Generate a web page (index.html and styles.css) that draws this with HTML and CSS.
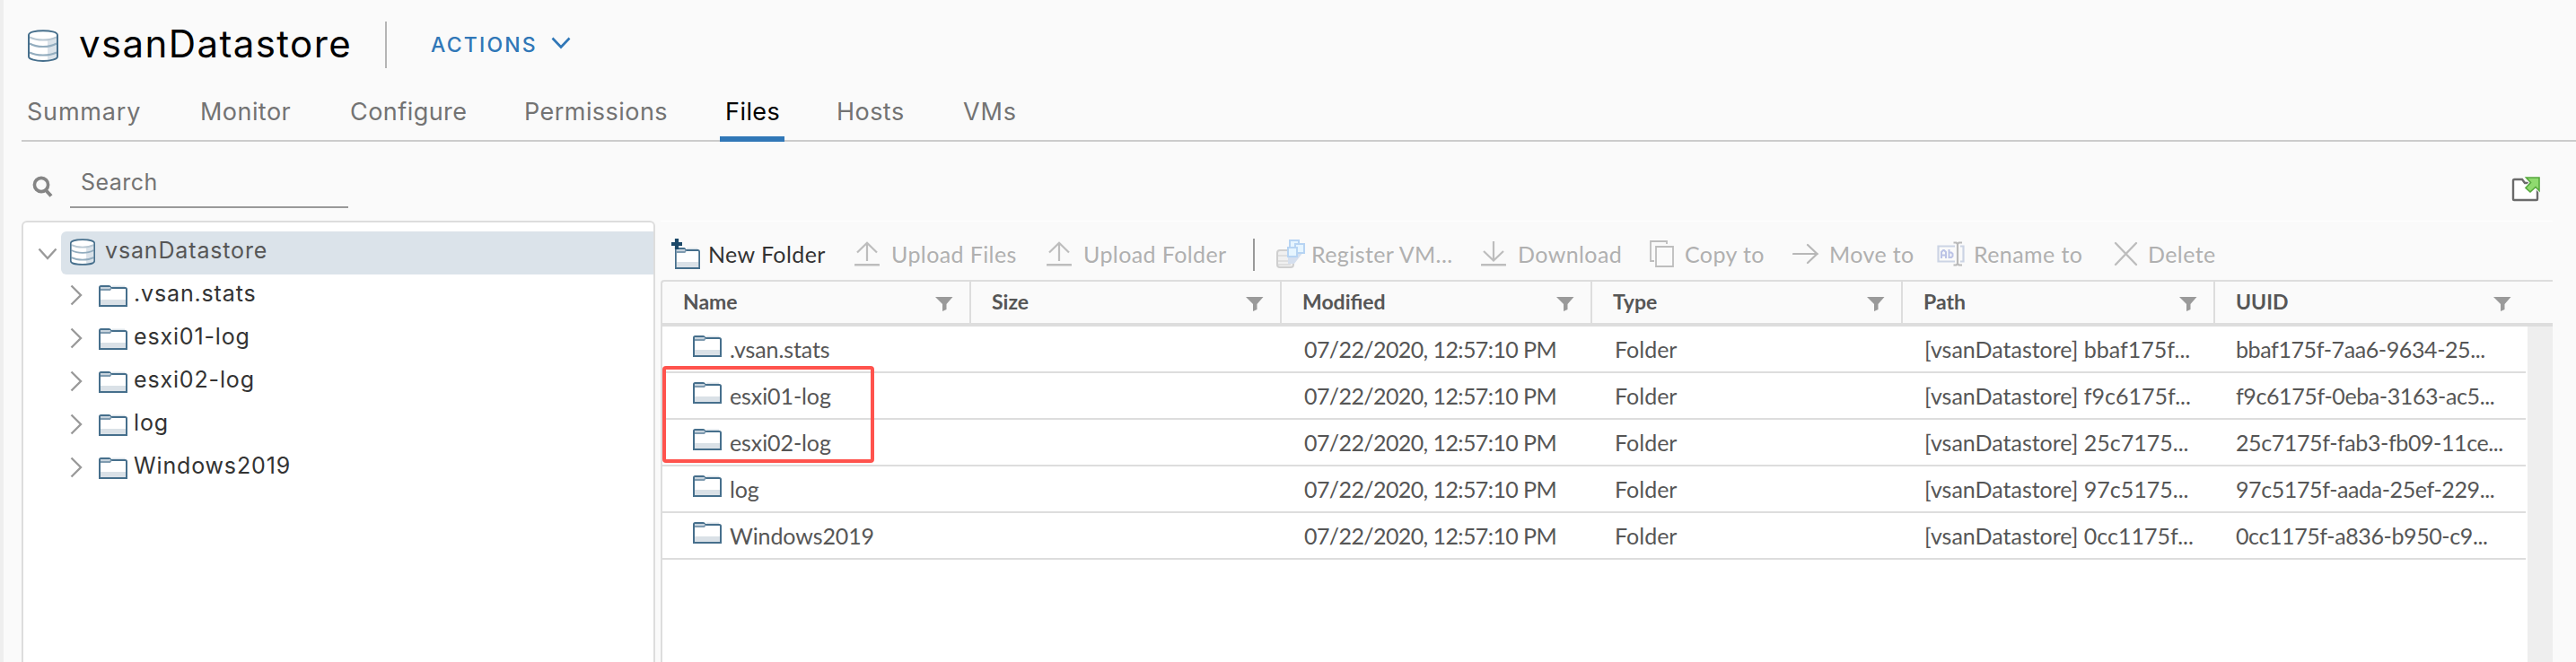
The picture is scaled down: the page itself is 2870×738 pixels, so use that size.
FILE: index.html
```html
<!DOCTYPE html>
<html lang="en">
<head>
<meta charset="utf-8">
<title>vsanDatastore</title>
<link rel="stylesheet" href="styles.css">
</head>
<body>
<svg class="defs" aria-hidden="true">
  <symbol id="folder" viewBox="0 0 32 24">
    <rect x="1" y="3" width="30" height="20" fill="#fff"/>
    <rect x="2" y="16" width="28" height="6" fill="#dae1e7"/>
    <path d="M1 23V2.500Q1 1 2.500 1H11.500Q13 1 13.500 3H29.500Q31 3 31 4.500V23Z" fill="none" stroke="#466f8c" stroke-width="2"/>
    <rect x="2" y="2" width="11" height="2.200" fill="#c8d4de"/>
    <path d="M2 5H12.500L14 3" fill="none" stroke="#7f9bb0" stroke-width="1.800"/>
    <path d="M15 1.200H29" stroke="#ccd7e0" stroke-width="1"/>
  </symbol>
  <symbol id="datastore" viewBox="0 0 34 36">
    <path d="M1 6C1 -.5 33 -.5 33 6V30C33 36.500 1 36.500 1 30Z" fill="#fff"/>
    <path d="M22 10.500Q29 9.500 32 7.500V30Q30 33 22 34Z" fill="#dbe3ea"/>
    <path d="M2 8.500Q8 11.500 17 11.500T32 8.500" fill="none" stroke="#b9c8d3" stroke-width="2.200"/>
    <path d="M2 15.500Q8 19 17 19T32 15.500M2 25.500Q8 28.500 17 28.500T32 25.500" fill="none" stroke="#93adbf" stroke-width="2.200"/>
    <path d="M1 6C1 -.5 33 -.5 33 6V30C33 36.500 1 36.500 1 30Z" fill="none" stroke="#466f8c" stroke-width="2"/>
  </symbol>
  <symbol id="right" viewBox="0 0 14 24"><path d="M1.500 1.500L12 12L1.500 22.500" fill="none" stroke="#9a9a9a" stroke-width="2.400"/></symbol>
  <symbol id="filter" viewBox="0 0 20 16"><path d="M0 0H19.500L12.500 8V14L8 16V8Z" fill="#9a9a9a"/></symbol>
  <symbol id="upload" viewBox="0 0 28 28"><path d="M14 22V2M3 12.500L14 1.800L25 12.500" fill="none" stroke="#bdbdbd" stroke-width="2.200"/><path d="M1 26.300H27" stroke="#bdbdbd" stroke-width="2.600" stroke-linecap="round"/></symbol>
  <symbol id="download" viewBox="0 0 28 28"><path d="M14 0V21M3 11L14 21.500L25 11" fill="none" stroke="#bdbdbd" stroke-width="2.200"/><path d="M1 26.300H27" stroke="#bdbdbd" stroke-width="2.600" stroke-linecap="round"/></symbol>
</svg>

<div class="page">
  <header class="title-bar">
    <svg class="title-icon"><use href="#datastore"/></svg>
    <h1 class="title">vsanDatastore</h1>
    <div class="actions"><span class="actions-label">ACTIONS</span>
      <svg class="actions-caret" viewBox="0 0 22 14"><path d="M1.500 1.500L11 11.500L20.500 1.500" fill="none" stroke="#3077b7" stroke-width="2.600"/></svg>
    </div>
  </header>

  <nav class="tabs">
    <a class="tab summary">Summary</a><a class="tab monitor">Monitor</a><a class="tab configure">Configure</a><a class="tab permissions">Permissions</a><a class="tab files active">Files</a><a class="tab hosts">Hosts</a><a class="tab vms">VMs</a>
  </nav>

  <div class="search-bar">
    <svg class="search-icon" viewBox="0 0 24 26"><circle cx="10" cy="10" r="7.600" fill="none" stroke="#858585" stroke-width="3.600"/><path d="M15 16L21 22.500" stroke="#858585" stroke-width="4"/></svg>
    <div class="search-field">Search</div>
    <svg class="open-icon" viewBox="0 0 32 28">
      <path d="M2 25V4.500Q2 3 3.500 3H12L15 7H29V25Q29 26 28 26H3Q2 26 2 25Z" fill="#fff" stroke="#6b6b6b" stroke-width="2.400"/>
      <path d="M16.500 1H31V15.500L27 11.500L21 17L16 12.500L21.500 6.500Z" fill="#8fda6f" stroke="#fafafa" stroke-width="3.500"/>
      <path d="M16.500 1H31V15.500L27 11.500L21 17L16 12.500L21.500 6.500Z" fill="#8fda6f" stroke="#55a83c" stroke-width="1.600"/>
    </svg>
  </div>

  <div class="main">
    <aside class="tree">
      <div class="root">
        <svg class="root-caret" viewBox="0 0 22 14"><path d="M1.500 1.500L11 12L20.500 1.500" fill="none" stroke="#9a9a9a" stroke-width="2.400"/></svg>
        <div class="root-row"><svg class="root-icon"><use href="#datastore"/></svg><span class="root-label">vsanDatastore</span></div>
      </div>
      <div class="node"><svg class="node-caret"><use href="#right"/></svg><svg class="folder"><use href="#folder"/></svg><span class="node-label">.vsan.stats</span></div>
      <div class="node"><svg class="node-caret"><use href="#right"/></svg><svg class="folder"><use href="#folder"/></svg><span class="node-label">esxi01-log</span></div>
      <div class="node"><svg class="node-caret"><use href="#right"/></svg><svg class="folder"><use href="#folder"/></svg><span class="node-label">esxi02-log</span></div>
      <div class="node"><svg class="node-caret"><use href="#right"/></svg><svg class="folder"><use href="#folder"/></svg><span class="node-label">log</span></div>
      <div class="node"><svg class="node-caret"><use href="#right"/></svg><svg class="folder"><use href="#folder"/></svg><span class="node-label">Windows2019</span></div>
    </aside>

    <section class="content">
      <div class="toolbar">
        <div class="tool enabled"><svg class="tool-icon tall" viewBox="0 0 32 34"><svg x="4" y="10" width="28" height="24" viewBox="0 0 32 24" preserveAspectRatio="none"><use href="#folder" width="32" height="24"/></svg><path d="M6 0V12M0 6H12" stroke="#1b4868" stroke-width="4.200"/></svg><span>New Folder</span></div>
        <div class="tool"><svg class="tool-icon"><use href="#upload"/></svg><span>Upload Files</span></div>
        <div class="tool"><svg class="tool-icon"><use href="#upload"/></svg><span>Upload Folder</span></div>
        <div class="tool-separator"></div>
        <div class="tool"><svg class="tool-icon vm" viewBox="0 0 32 32">
          <rect x="1" y="12" width="18" height="19" rx="3" fill="#f0f0f0" stroke="#cfcfcf" stroke-width="2"/>
          <path d="M2 18H14M2 24H16M2 28H16" stroke="#d9d9d9" stroke-width="1.600"/>
          <path d="M13 20L30 14L20 27H13Z" fill="#d5dfee"/>
          <rect x="15" y="1" width="10" height="9" fill="#e6f5ff" stroke="#b7d4f3" stroke-width="2"/>
          <rect x="21" y="5" width="10" height="10" fill="#e6f5ff" stroke="#b7d4f3" stroke-width="2"/>
          <rect x="13" y="9" width="10" height="10" fill="#e6f5ff" stroke="#b7d4f3" stroke-width="2"/></svg><span>Register VM...</span></div>
        <div class="tool"><svg class="tool-icon"><use href="#download"/></svg><span>Download</span></div>
        <div class="tool"><svg class="tool-icon copy" viewBox="0 0 28 30"><path d="M5 23H1V1H19V4M7 7H26V29H7Z" fill="none" stroke="#bdbdbd" stroke-width="1.800"/></svg><span>Copy to</span></div>
        <div class="tool"><svg class="tool-icon move" viewBox="0 0 30 24"><path d="M1 12H28M17 2L27.500 12L17 22" fill="none" stroke="#b8b8b8" stroke-width="2.200" stroke-linecap="round"/></svg><span>Move to</span></div>
        <div class="tool"><svg class="tool-icon rename" viewBox="0 0 32 28">
          <path d="M20 5.500H1.500V22.500H20M26 5.500H29.500V22.500H26" fill="none" stroke="#ccd4e4" stroke-width="2.200"/>
          <path d="M5 19V12L7 10H8L10 12V19M5 15.500H10M13.500 9V18H16L17.500 16.500V14L16 12.500H14" fill="none" stroke="#bcc3e6" stroke-width="2"/>
          <path d="M18.500 1.500H21.500L23 3L24.500 1.500H28M18.500 26.500H21.500L23 25L24.500 26.500H28M23 3V25" fill="none" stroke="#b9b9b9" stroke-width="2.200"/></svg><span>Rename to</span></div>
        <div class="tool"><svg class="tool-icon delete" viewBox="0 0 28 28"><path d="M2 2L25 26M25 2L2 26" fill="none" stroke="#bdbdbd" stroke-width="2.400" stroke-linecap="round"/></svg><span>Delete</span></div>
      </div>

      <div class="grid">
        <div class="grid-head">
          <div class="head-cell">Name<svg class="filter"><use href="#filter"/></svg></div>
          <div class="head-cell">Size<svg class="filter"><use href="#filter"/></svg></div>
          <div class="head-cell">Modified<svg class="filter"><use href="#filter"/></svg></div>
          <div class="head-cell">Type<svg class="filter"><use href="#filter"/></svg></div>
          <div class="head-cell">Path<svg class="filter"><use href="#filter"/></svg></div>
          <div class="head-cell last">UUID<svg class="filter"><use href="#filter"/></svg></div>
        </div>
        <div class="grid-body">
          <div class="rows">
            <div class="row"><div class="name"><svg class="folder"><use href="#folder"/></svg><span>.vsan.stats</span></div><div></div><div class="date">07/22/2020, 12:57:10 PM</div><div>Folder</div><div class="path">[vsanDatastore] bbaf175f...</div><div class="uuid">bbaf175f-7aa6-9634-25...</div></div>
            <div class="row"><div class="name"><svg class="folder"><use href="#folder"/></svg><span>esxi01-log</span></div><div></div><div class="date">07/22/2020, 12:57:10 PM</div><div>Folder</div><div class="path">[vsanDatastore] f9c6175f...</div><div class="uuid">f9c6175f-0eba-3163-ac5...</div></div>
            <div class="row"><div class="name"><svg class="folder"><use href="#folder"/></svg><span>esxi02-log</span></div><div></div><div class="date">07/22/2020, 12:57:10 PM</div><div>Folder</div><div class="path">[vsanDatastore] 25c7175...</div><div class="uuid">25c7175f-fab3-fb09-11ce...</div></div>
            <div class="row"><div class="name"><svg class="folder"><use href="#folder"/></svg><span>log</span></div><div></div><div class="date">07/22/2020, 12:57:10 PM</div><div>Folder</div><div class="path">[vsanDatastore] 97c5175...</div><div class="uuid">97c5175f-aada-25ef-229...</div></div>
            <div class="row"><div class="name"><svg class="folder"><use href="#folder"/></svg><span>Windows2019</span></div><div></div><div class="date">07/22/2020, 12:57:10 PM</div><div>Folder</div><div class="path">[vsanDatastore] 0cc1175f...</div><div class="uuid">0cc1175f-a836-b950-c9...</div></div>
            <div class="highlight"></div>
          </div>
          <div class="scroll-track"></div>
        </div>
      </div>
    </section>
  </div>
</div>
</body>
</html>
```
FILE: styles.css
```css
* { box-sizing: border-box; }
body { margin: 0; background: #fafafa; font-family: Lato, "Open Sans", sans-serif; color: #565656; }
svg { display: block; flex: none; }
.defs { position: absolute; width: 0; height: 0; }
.page { width: 2870px; height: 738px; overflow: hidden; border-left: 4px solid #eee; padding-left: 20px; display: flex; flex-direction: column; white-space: nowrap; }

.title-bar, .tabs, .search-bar, .tree { font-family: Inter, Lato, sans-serif; }
.title-bar { flex: none; height: 100px; display: flex; align-items: flex-start; padding: 24px 0 0 7px; }
.title-icon { width: 34px; height: 36px; margin-top: 9px; }
.title { margin: 0 0 0 23px; width: 341px; height: 52px; font-size: 42px; line-height: 49px; font-weight: 400; color: #000; letter-spacing: 1.400px; }
.actions { height: 52px; border-left: 2px solid #b5b5b5; padding-left: 49px; display: flex; align-items: center; color: #3077b7; font-size: 23px; font-weight: 500; letter-spacing: 2.200px; }
.actions-label { width: 134px; }
.actions-caret { width: 22px; height: 14px; margin-bottom: 4px; }

.tabs { flex: none; height: 58px; display: flex; border-bottom: 2px solid #ccc; font-size: 27px; line-height: 49px; color: #737373; letter-spacing: .450px; }
.tab { height: 58px; padding-left: 6px; }
.summary { width: 193px; letter-spacing: .8px; }
.monitor { width: 167px; }
.configure { width: 194px; }
.permissions { width: 224px; }
.files { width: 72px; margin-right: 52px; }
.hosts { width: 141px; }
.vms { letter-spacing: .9px; }
.active { color: #000; border-bottom: 6px solid #3077b7; }

.search-bar { flex: none; height: 88px; display: flex; padding-left: 12px; }
.search-icon { width: 24px; height: 26px; margin-top: 38px; }
.search-field { margin: 22px 0 0 18px; width: 310px; height: 52px; padding-left: 12px; border-bottom: 2px solid #999; font-size: 25px; line-height: 47px; color: #737373; letter-spacing: .450px; }
.open-icon { width: 32px; height: 28px; margin: 39px 40px 0 auto; }

.main { flex: 1; display: flex; }
.tree { width: 706px; background: #fff; border: 2px solid #ddd; border-bottom: 0; border-radius: 6px 6px 0 0; padding-top: 10px; font-size: 25px; color: #333; letter-spacing: .850px; }
.root { display: flex; height: 48px; padding-left: 16px; }
.root-caret { width: 22px; height: 14px; margin-top: 18px; }
.root-row { margin-left: 4px; flex: 1; display: flex; padding-left: 10px; background: #dbe3ea; border-radius: 6px 0 0 6px; color: #565656; line-height: 43px; }
.root-icon { width: 28px; height: 30px; margin-top: 8px; }
.root-label { margin-left: 11px; }
.node { display: flex; height: 48px; padding-left: 52px; line-height: 42px; }
.node-caret { width: 14px; height: 24px; margin: 11px 18px 0 0; }
.folder { width: 32px; height: 24px; }
.node .folder { margin-top: 12px; }
.node-label { margin-left: 7px; }

.content { flex: 1; margin: 0 26px 0 2px; border-left: 4px solid #fafafa; box-shadow: inset 0 1px #fff; }
.toolbar { height: 66px; padding: 2px 0 0 12px; display: grid; grid-template-columns: 204px 214px 230px 26px 228px 188px 159px 161px 197px 120px; font-size: 25px; line-height: 70px; color: #b0b0b0; letter-spacing: .4px; }
.tool { display: flex; align-items: center; }
.enabled { color: #333; }
.tool-icon { width: 28px; height: 28px; margin-right: 13px; }
.tall { width: 32px; height: 34px; margin-right: 9px; }
.vm { width: 32px; height: 32px; margin-right: 7px; }
.move { width: 30px; height: 24px; margin-right: 11px; }
.rename { width: 32px; margin-right: 9px; }
.copy { height: 30px; margin-right: 11px; }
.delete { margin-right: 10px; }
.tool-separator { width: 2px; height: 36px; background: #999; margin-top: 18px; }

.grid { height: 426px; border: 2px solid #ddd; border-right: 0; border-bottom: 0; border-radius: 4px 0 0 0; }
.grid-head { height: 50px; display: grid; grid-template-columns: 344px 346px 346px 346px 348px 376px; border-bottom: 4px solid #ddd; font-weight: 700; font-size: 23px; line-height: 45px; }
.head-cell { display: flex; justify-content: space-between; padding: 0 18px 0 23px; border-right: 2px solid #ddd; }
.last { border-right: 0; padding-right: 46px; }
.filter { width: 20px; height: 16px; margin-top: 17px; }
.grid-body { display: flex; height: 374px; background: #fff; }
.rows { position: relative; width: 2076px; }
.row { height: 52px; border-bottom: 2px solid #ddd; display: grid; grid-template-columns: 344px 346px 346px 346px 348px 346px; font-size: 25px; line-height: 50px; }
.row > div { padding-left: 25px; }
.row .name { padding-left: 34px; display: flex; letter-spacing: -.1px; }
.row .date { letter-spacing: -.6px; }
.row .path { letter-spacing: 0; padding-left: 24px; }
.row .uuid { letter-spacing: -.400px; padding-left: 23px; }
.name .folder { margin: 10px 9px 0 0; }
.scroll-track { width: 28px; margin-left: auto; background: #eee; }
.highlight { position: absolute; left: 0; top: 44px; width: 236px; height: 108px; border: 4px solid #ff534d; border-radius: 4px; }
```
